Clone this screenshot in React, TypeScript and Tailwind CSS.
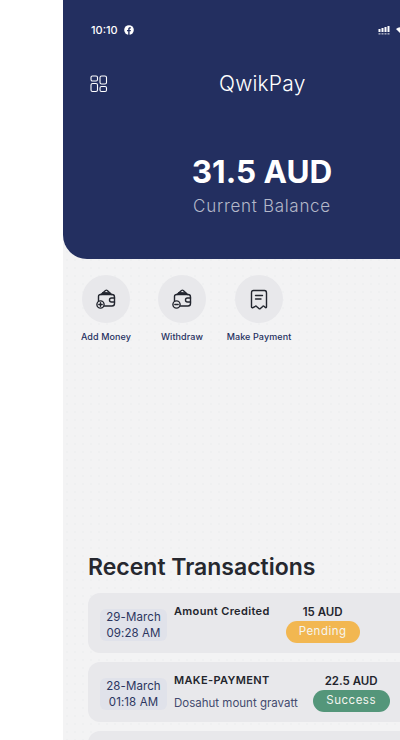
import React from "react";

const Wallet = ({ minus }: { minus?: boolean }) => (
  <svg width="22" height="22" viewBox="0 0 22 22" fill="none" stroke="#23262f" strokeWidth="1.4" strokeLinecap="round" strokeLinejoin="round">
    <path d="M3.5 13V8.5C3.5 7.4 4.4 6.5 5.5 6.5H17C18.4 6.5 19.5 7.6 19.5 9V15.5C19.5 17 18.4 18 17 18H9.5" />
    <path d="M6 6.5L10.5 2.5C11 2.1 11.8 2.1 12.3 2.5L16.5 6.5" />
    <path d="M19.5 10H16.5C15.4 10 14.5 10.9 14.5 12C14.5 13.1 15.4 14 16.5 14H19.5" />
    <circle cx="5.5" cy="16.5" r="3.6" />
    <path d="M3.8 16.5H7.2" />
    {!minus && <path d="M5.5 14.8V18.2" />}
    <path d="M8 4.9L14.5 5.2" strokeWidth="2" />
  </svg>
);

const Receipt = () => (
  <svg width="22" height="22" viewBox="0 0 22 22" fill="none" stroke="#23262f" strokeWidth="1.4" strokeLinecap="round" strokeLinejoin="round">
    <path d="M5.5 2.5H16.5C17.9 2.5 18.5 3.4 18.5 5V19C18.5 19.6 17.9 19.9 17.4 19.5L16 18.3C15.6 18 15 18 14.7 18.4L12.4 20.5C12 20.9 11.3 20.9 10.9 20.5L8.6 18.4C8.2 18 7.6 18 7.2 18.3L5 19.7C4.4 20 3.5 19.6 3.5 19V5C3.5 3.4 4.1 2.5 5.5 2.5Z" />
    <path d="M7.5 7.5H14.5" />
    <path d="M7.5 11H13" />
  </svg>
);

const Action = ({ icon, label, w }: { icon: React.ReactNode; label: string; w: string }) => (
  <div className={`flex flex-col items-center ${w}`}>
    <div className="flex h-12 w-12 items-center justify-center rounded-full bg-[#e8e8eb]">{icon}</div>
    <span className="mt-[8px] whitespace-nowrap text-[9px] font-medium leading-[12px] tracking-[0.1px] text-[#25305f]">{label}</span>
  </div>
);

const Row = ({ date, time, title, sub, amount, status, pill, amtW }: {
  date: string; time: string; title: string; sub?: string; amount: string; status: string; pill: string; amtW: string;
}) => (
  <div className="flex h-[60px] w-[340px] shrink-0 rounded-xl bg-[#e8e8eb] pl-3">
    <div className="mt-4 flex h-[32px] w-[67px] shrink-0 flex-col items-center rounded-md bg-[#e0e2ea] text-[11.5px] leading-[16px] tracking-[0.1px] text-[#2b3560]">
      <span>{date}</span>
      <span>{time}</span>
    </div>
    <div className="ml-[7px] flex flex-col pt-[10px]">
      <span className="whitespace-nowrap text-[11px] font-semibold leading-[16px] tracking-[0.35px] text-[#23252d]">{title}</span>
      {sub && <span className="mt-[7px] whitespace-nowrap text-[11.5px] leading-[16px] text-[#434a6e]">{sub}</span>}
    </div>
    <div className={`flex flex-col items-center pt-[11px] ${amtW}`}>
      <span className="whitespace-nowrap text-[11.5px] font-semibold leading-[16px] text-[#23252d]">{amount}</span>
      <span className={`mt-px flex h-[22px] items-center justify-center rounded-full text-[11.5px] tracking-[0.5px] text-[#f5f5f0] ${pill}`}>{status}</span>
    </div>
  </div>
);

export default function App() {
  return (
    <div className="flex h-[740px] w-[400px] overflow-hidden bg-white" style={{ fontFamily: "Inter, sans-serif" }}>
      <div className="w-[63px] shrink-0" />
      <div className="flex h-[740px] w-[400px] shrink-0 flex-col bg-[#f3f3f4] bg-[radial-gradient(#eff0f1_1px,transparent_1px)] bg-[size:8px_8px]">
        <header className="flex h-[259px] shrink-0 flex-col rounded-bl-[24px] bg-[#232f60] text-white">
          <div className="mt-[22px] flex h-[16px] items-center justify-between pl-[28px]">
            <div className="flex items-center gap-[6px]">
              <span className="text-[11px] font-medium leading-[16px]">10:10</span>
              <svg width="10" height="10" viewBox="0 0 10 10">
                <circle cx="5" cy="5" r="4.8" fill="#fff" />
                <path d="M4.2 10V6.3H3V5H4.2V4C4.2 2.9 4.9 2.3 5.9 2.3H6.9V3.5H6.2C5.8 3.5 5.6 3.7 5.6 4.1V5H6.9L6.7 6.3H5.6V10Z" fill="#232f60" />
              </svg>
            </div>
            <div className="flex w-[85px] items-center">
              <svg width="14" height="12" viewBox="0 0 14 12">
                <g fill="#fff">
                  <rect x="0.5" y="5" width="2" height="3" />
                  <rect x="3.5" y="4" width="2" height="4" />
                  <rect x="6.5" y="3" width="2" height="5" />
                  <rect x="9.5" y="2" width="2" height="6" />
                </g>
                <g fill="#fff" opacity="0.55">
                  <rect x="0.5" y="9" width="2" height="1.6" />
                  <rect x="3.5" y="9" width="2" height="1.6" />
                  <rect x="6.5" y="9" width="2" height="1.6" />
                  <rect x="9.5" y="9" width="2" height="1.6" />
                </g>
              </svg>
              <svg width="10" height="10" viewBox="0 0 10 10" className="ml-[4px]">
                <path d="M0 4C3 1.5 7 1.5 10 4L5 9Z" fill="#fff" />
              </svg>
            </div>
          </div>
          <div className="mt-[31px] flex h-[30px] items-center px-[27px]">
            <svg width="18" height="18" viewBox="0 0 18 18" fill="none" stroke="#fff" strokeWidth="1.1">
              <rect x="1" y="1" width="6.5" height="5" rx="1.4" />
              <rect x="10" y="1" width="6.5" height="8" rx="1.6" />
              <rect x="1" y="8.5" width="6.5" height="8" rx="1.6" />
              <rect x="10" y="11.5" width="6.5" height="5" rx="1.4" />
            </svg>
            <span className="ml-[111px] text-[21px] font-light leading-[30px] tracking-[0.2px]">QwikPay</span>
          </div>
          <div className="mt-[53px] flex flex-col items-center pr-[2px]">
            <span className="text-[31.5px] font-bold leading-[40px]">31.5 AUD</span>
            <span className="mt-[2px] text-[17px] font-light leading-[24px] tracking-[0.7px] text-[#b4b8c9]">Current Balance</span>
          </div>
        </header>

        <div className="mt-4 flex pl-[18px]">
          <Action icon={<Wallet />} label="Add Money" w="w-[50px]" />
          <Action icon={<Wallet minus />} label="Withdraw" w="ml-[26px] w-[50px]" />
          <Action icon={<Receipt />} label="Make Payment" w="ml-[28px] w-[48px]" />
        </div>

        <h2 className="ml-[25px] mt-[209px] text-[23px] font-semibold leading-[30px] text-[#26282f]">Recent Transactions</h2>

        <div className="ml-[25px] mt-[11px] flex flex-col gap-[9px]">
          <Row date="29-March" time="09:28 AM" title="Amount Credited" amount="15 AUD" status="Pending" pill="w-[74px] bg-[#f2b751]" amtW="ml-[16px] w-[74px]" />
          <Row date="28-March" time="01:18 AM" title="MAKE-PAYMENT" sub="Dosahut mount gravatt" amount="22.5 AUD" status="Success" pill="w-[77px] bg-[#54967a]" amtW="ml-[15px] w-[77px]" />
          <div className="h-[60px] w-[340px] shrink-0 rounded-xl bg-[#e8e8eb]" />
        </div>
      </div>
    </div>
  );
}
